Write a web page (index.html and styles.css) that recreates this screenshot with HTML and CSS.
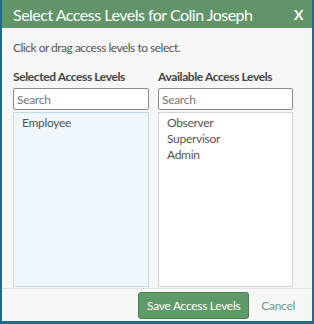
FILE: index.html
```html
<!DOCTYPE html>
<html lang="en">
<head>
    <meta charset="UTF-8">
    <meta name="viewport" content="width=device-width, initial-scale=1.0">
    <title>Select Access Levels</title>
    <link rel="stylesheet" href="styles.css">
</head>
<body>
    <div class="dialog">
        <header class="dialog-header">
            <h1 class="dialog-title">Select Access Levels for Colin Joseph</h1>
            <span class="close">X</span>
        </header>

        <div class="dialog-body">
            <p class="hint">Click or drag access levels to select.</p>

            <div class="columns">
                <div class="column">
                    <div class="column-label">Selected Access Levels</div>
                    <input class="search" type="text" placeholder="Search">
                    <ul class="level-list selected">
                        <li>Employee</li>
                    </ul>
                </div>
                <div class="column">
                    <div class="column-label">Available Access Levels</div>
                    <input class="search" type="text" placeholder="Search">
                    <ul class="level-list">
                        <li>Observer</li>
                        <li>Supervisor</li>
                        <li>Admin</li>
                    </ul>
                </div>
            </div>
        </div>

        <footer class="dialog-footer">
            <button class="save-btn">Save Access Levels</button>
            <a class="cancel" href="#">Cancel</a>
        </footer>
    </div>
</body>
</html>
```

FILE: styles.css
```css
* {
    margin: 0;
    padding: 0;
    box-sizing: border-box;
}

body {
    font-family: 'Lato', 'Open Sans', sans-serif;
    background: #1e6a8c;
    color: #444;
    letter-spacing: -0.3px;
}

.dialog {
    width: 314px;
    height: 324px;
    background: #f7f7f7;
    border-left: 2px solid #1e6a8c;
    border-right: 2px solid #1e6a8c;
    border-bottom: 3px solid #1e6a8c;
    display: flex;
    flex-direction: column;
}

.dialog-header {
    background: #619468;
    color: #fff;
    height: 28px;
    display: flex;
    justify-content: space-between;
    align-items: center;
    padding: 0 9px 0 11px;
}

.dialog-title {
    font-size: 16px;
    font-weight: normal;
    letter-spacing: -0.5px;
}

.close {
    font-size: 14px;
    font-weight: bold;
}

.dialog-body {
    padding: 12px 19px 0 11px;
    flex: 1;
}

.hint {
    font-size: 12px;
    color: #555;
    line-height: 16px;
    margin-bottom: 13px;
    letter-spacing: -0.5px;
}

.columns {
    display: grid;
    grid-template-columns: 136px 135px;
    gap: 9px;
}

.column-label {
    font-size: 12px;
    font-weight: bold;
    color: #444;
    line-height: 16px;
    margin-bottom: 3px;
    letter-spacing: -0.4px;
}

.search {
    display: block;
    width: 100%;
    height: 22px;
    border: 1px solid #8a8a8a;
    border-radius: 2px;
    background: #fff;
    font-family: inherit;
    font-size: 12px;
    letter-spacing: -0.3px;
    padding: 0 3px;
    color: #444;
    margin-bottom: 2px;
}

.search::placeholder {
    color: #777;
}

.level-list {
    list-style: none;
    height: 175px;
    border: 1px solid #d4d4d4;
    background: #fff;
    padding: 2px 0 0 8px;
    font-size: 12px;
    line-height: 16px;
    color: #555;
}

.level-list.selected {
    background: #eff7fd;
    border-color: #c6d9e6;
}

.dialog-footer {
    border-top: 1px solid #e2e2e2;
    display: flex;
    justify-content: flex-end;
    align-items: center;
    gap: 12px;
    padding: 3px 17px 2px 0;
}

.save-btn {
    background: #5f9a69;
    border: 1px solid #497d53;
    border-radius: 3px;
    color: #fff;
    font-family: inherit;
    font-size: 12px;
    letter-spacing: -0.3px;
    height: 27px;
    padding: 0 8px;
}

.cancel {
    color: #6c9a78;
    font-size: 12px;
    text-decoration: none;
}
```
